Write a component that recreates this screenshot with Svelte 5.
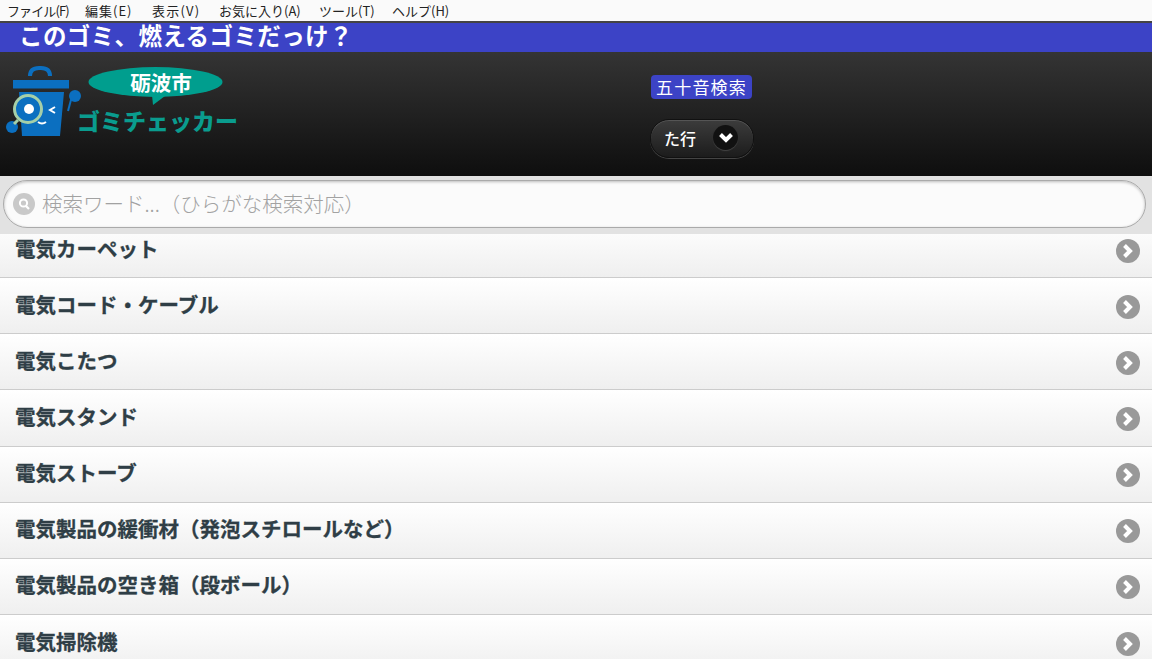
<script>
  // start offsets come from the reference, the kana there run narrower than Noto
  const menus = [
    { label: 'ファイル(F)', w: 78, ls: -0.9 },
    { label: '編集(E)', w: 67, ls: 1 },
    { label: '表示(V)', w: 67, ls: 1.2 },
    { label: 'お気に入り(A)', w: 100, ls: 0 },
    { label: 'ツール(T)', w: 73, ls: 0 },
    { label: 'ヘルプ(H)', w: 60, ls: 0 }
  ];
  const items = [
    '電気カーペット',
    '電気コード・ケーブル',
    '電気こたつ',
    '電気スタンド',
    '電気ストーブ',
    '電気製品の緩衝材（発泡スチロールなど）',
    '電気製品の空き箱（段ボール）',
    '電気掃除機'
  ];
</script>

<div class="page">
  <nav class="menubar">
    {#each menus as m}
      <span style="width: {m.w}px; letter-spacing: {m.ls}px">{m.label}</span>
    {/each}
  </nav>

  <h1 class="title">このゴミ、燃えるゴミだっけ？</h1>

  <header class="head">
    <svg class="logo" width="240" height="80" viewBox="0 0 240 80">
      <!-- bin -->
      <path d="M30 20q0-8 9-8h2q9 0 9 8" fill="none" stroke="#0b6fc0" stroke-width="4" />
      <rect x="13" y="24" width="56" height="8.5" fill="#0b6fc0" />
      <path d="M19 36h45l-4 44H22z" fill="#0b6fc0" />
      <path d="M68 55l4-15" stroke="#0b6fc0" stroke-width="2" />
      <circle cx="75" cy="40" r="6" fill="#0b6fc0" />
      <circle cx="12" cy="71" r="6" fill="#0b6fc0" />
      <circle cx="28" cy="53" r="13.5" fill="#0b6fc0" stroke="#a5cfa8" stroke-width="3" />
      <circle cx="29" cy="53" r="5" fill="#fff" />
      <path d="M18 64l-4 4" stroke="#a5cfa8" stroke-width="3" />
      <path d="M55 51l-5 3 5 3" fill="none" stroke="#fff" stroke-width="2" />
      <path d="M38 66q4 3 8 0" fill="none" stroke="#fff" stroke-width="2" />
      <!-- balloon -->
      <ellipse cx="155.5" cy="26" rx="67" ry="15" fill="#009e8e" />
      <path d="M152 39l1 10 12-9z" fill="#009e8e" />
      <text class="city" x="161" y="35">砺波市</text>
      <text class="brand" x="77" y="74">ゴミチェッカー</text>
    </svg>

    <div class="center">
      <span class="badge">五十音検索</span>
      <button class="select">
        <span>た行</span>
        <i class="round">
          <svg width="18" height="14" viewBox="0 0 18 14"><path d="M3.5 3.5l5.5 5.5 5.5-5.5" fill="none" stroke="#fff" stroke-width="4" /></svg>
        </i>
      </button>
    </div>
  </header>

  <div class="search">
    <div class="field">
      <i class="glass">
        <svg width="16" height="16" viewBox="0 0 16 16"><circle cx="7.5" cy="7" r="3.6" fill="none" stroke="#fff" stroke-width="2" /><path d="M10 10l3 3" stroke="#fff" stroke-width="2.2" /></svg>
      </i>
      <span>検索ワード...（ひらがな検索対応）</span>
    </div>
  </div>

  <div class="listwrap">
    <ul class="list">
      {#each items as item}
        <li>
          <span class="name">{item}</span>
          <i class="arrow">
            <svg width="14" height="16" viewBox="0 0 14 16"><path d="M3.5 2.5l5.5 5.5-5.5 5.5" fill="none" stroke="#fff" stroke-width="4" /></svg>
          </i>
        </li>
      {/each}
    </ul>
  </div>
</div>

<style>
  :global(body) {
    margin: 0;
    overflow: hidden;
  }
  .page {
    height: 659px;
    display: flex;
    flex-direction: column;
    overflow: hidden;
    font-family: "Noto Sans CJK JP", "Liberation Sans", sans-serif;
  }
  .menubar {
    height: 21px;
    flex: none;
    display: flex;
    align-items: center;
    padding-left: 7px;
    background: #fafafa;
    border-bottom: 2px solid #444;
    font-size: 13px;
    color: #222;
  }
  .menubar span {
    flex: none;
    white-space: nowrap;
  }
  .title {
    height: 29px;
    flex: none;
    margin: 0;
    padding-left: 19px;
    background: #3c43c6;
    color: #fff;
    font-size: 23.5px;
    font-weight: 700;
    line-height: 25px;
    letter-spacing: 0.4px;
  }
  .head {
    height: 124px;
    flex: none;
    position: relative;
    display: flex;
    padding-left: 650px;
    background: linear-gradient(#343434, #0e0e0e);
  }
  .logo {
    position: absolute;
    left: 0;
    top: 4px;
  }
  .city {
    font-size: 20.5px;
    font-weight: 700;
    fill: #fff;
    text-anchor: middle;
  }
  .brand {
    font-size: 23px;
    font-weight: 900;
    fill: #0a9c8e;
  }
  .center {
    display: flex;
    flex-direction: column;
    align-items: center;
    gap: 20px;
    padding-top: 23px;
  }
  .badge {
    width: 101px;
    height: 24px;
    margin-left: -1px;
    box-sizing: border-box;
    background: #3c43c6;
    border-radius: 4px;
    color: #fff;
    font-size: 17px;
    line-height: 23px;
    text-align: center;
    letter-spacing: 1.2px;
  }
  .select {
    width: 104px;
    height: 39px;
    display: flex;
    align-items: center;
    justify-content: space-between;
    padding: 0 15px 2px 13px;
    background: linear-gradient(#3c3c3c, #1c1c1c);
    border: 1px solid #111;
    border-radius: 19px;
    box-shadow: inset 0 1px 0 #555, 0 1px 0 #444;
    color: #fff;
    font-family: inherit;
    font-size: 16px;
    font-weight: 500;
  }
  .round {
    width: 25px;
    height: 25px;
    border-radius: 50%;
    background: #111;
    box-shadow: 0 1px 1px #444;
    display: flex;
    align-items: center;
    justify-content: center;
  }
  .search {
    height: 58px;
    flex: none;
    box-sizing: border-box;
    padding: 4px 6px 0 3px;
    background: #e2e2e2;
    position: relative;
    z-index: 1;
  }
  .field {
    height: 48px;
    box-sizing: border-box;
    display: flex;
    align-items: center;
    gap: 7px;
    padding: 0 0 3px 9px;
    background: #fbfbfb;
    border: 1px solid #aaa;
    border-radius: 24px;
    box-shadow: inset 0 1px 3px #bbb;
    color: #a2a2a2;
    font-size: 20.5px;
    font-weight: 300;
  }
  .glass {
    width: 22px;
    height: 22px;
    margin-top: 3px;
    border-radius: 50%;
    background: #c9c9c9;
    display: flex;
    align-items: center;
    justify-content: center;
  }
  .listwrap {
    flex: 1;
    overflow: hidden;
  }
  .list {
    list-style: none;
    margin: -12px 0 0;
    padding: 0;
  }
  .list li {
    height: 55.15px;
    display: flex;
    align-items: center;
    justify-content: space-between;
    padding: 0 12px 0 15px;
    border-bottom: 1px solid #ccc;
    background: linear-gradient(#fff, #efefef);
    color: #2f3e46;
    font-size: 20.5px;
    font-weight: 700;
    -webkit-text-stroke: 0.3px #2f3e46;
  }
  .name {
    margin-top: -4px;
  }
  .arrow {
    width: 24px;
    height: 24px;
    margin-top: 2px;
    border-radius: 50%;
    background: #999;
    display: flex;
    align-items: center;
    justify-content: center;
  }
</style>
